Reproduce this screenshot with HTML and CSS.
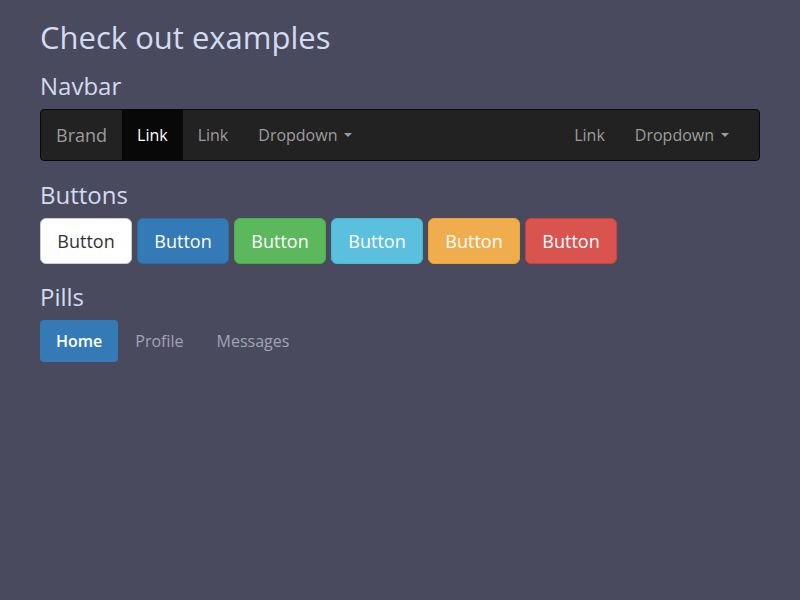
FILE: index.html
```html
<!DOCTYPE html>
<html>
<head>
<meta charset="utf-8">
<link rel="stylesheet" href="styles.css">
</head>
<body>
<div class="page">
  <h1 class="title">Check out examples</h1>
  <h2 class="section">Navbar</h2>
  <nav class="navbar">
    <div class="nav-left">
      <span class="brand">Brand</span>
      <span class="nav-link active">Link</span>
      <span class="nav-link">Link</span>
      <span class="nav-link">Dropdown <span class="caret"></span></span>
    </div>
    <div class="nav-right">
      <span class="nav-link">Link</span>
      <span class="nav-link">Dropdown <span class="caret"></span></span>
    </div>
  </nav>
  <h2 class="section">Buttons</h2>
  <div class="buttons">
    <span class="btn btn-default">Button</span>
    <span class="btn btn-primary">Button</span>
    <span class="btn btn-success">Button</span>
    <span class="btn btn-info">Button</span>
    <span class="btn btn-warning">Button</span>
    <span class="btn btn-danger">Button</span>
  </div>
  <h2 class="section">Pills</h2>
  <div class="pills">
    <span class="pill active">Home</span>
    <span class="pill">Profile</span>
    <span class="pill">Messages</span>
  </div>
</div>
</body>
</html>
```
FILE: styles.css
```css
html, body {
  margin: 0;
  padding: 0;
  background: #4a4a5e;
}
body {
  font-family: "Open Sans", "Noto Sans", sans-serif;
  color: #d3dbef;
}
.page {
  padding: 16px 40px;
}
.title {
  margin: 0 0 13px;
  font-size: 31px;
  font-weight: 400;
  line-height: 42px;
}
.section {
  margin: 8px 0 8px;
  font-size: 24px;
  font-weight: 400;
  line-height: 30px;
}
.navbar {
  display: flex;
  justify-content: space-between;
  height: 50px;
  background: #222;
  border: 1px solid #080808;
  border-radius: 4px;
  margin-bottom: 19px;
}
.nav-left, .nav-right {
  display: flex;
}
.nav-right {
  margin-right: 15px;
}
.brand, .nav-link {
  display: flex;
  align-items: center;
  padding: 0 15px;
  color: #9d9d9d;
  font-size: 16px;
}
.brand {
  font-size: 18px;
}
.nav-link.active {
  background: #080808;
  color: #fff;
}
.caret {
  display: inline-block;
  width: 0;
  height: 0;
  margin-left: 7px;
  border-top: 4px solid #9d9d9d;
  border-left: 4px solid transparent;
  border-right: 4px solid transparent;
}
.buttons {
  display: flex;
  gap: 5px;
  margin-bottom: 18px;
}
.btn {
  display: inline-block;
  width: 90px;
  box-sizing: content-box;
  padding: 10px 0;
  text-align: center;
  font-size: 18px;
  line-height: 24px;
  border: 1px solid transparent;
  border-radius: 6px;
  color: #fff;
}
.btn-default { background: #fff; color: #333; border-color: #ccc; }
.btn-primary { background: #337ab7; border-color: #2e6da4; }
.btn-success { background: #5cb85c; border-color: #4cae4c; }
.btn-info { background: #5bc0de; border-color: #46b8da; }
.btn-warning { background: #f0ad4e; border-color: #eea236; }
.btn-danger { background: #d9534f; border-color: #d43f3a; }
.pills {
  display: flex;
  gap: 1px;
}
.pill {
  padding: 10px 16px;
  font-size: 16px;
  line-height: 22px;
  border-radius: 4px;
  color: #a3a3b5;
}
.pill.active {
  background: #337ab7;
  color: #fff;
  font-weight: 600;
}
```
